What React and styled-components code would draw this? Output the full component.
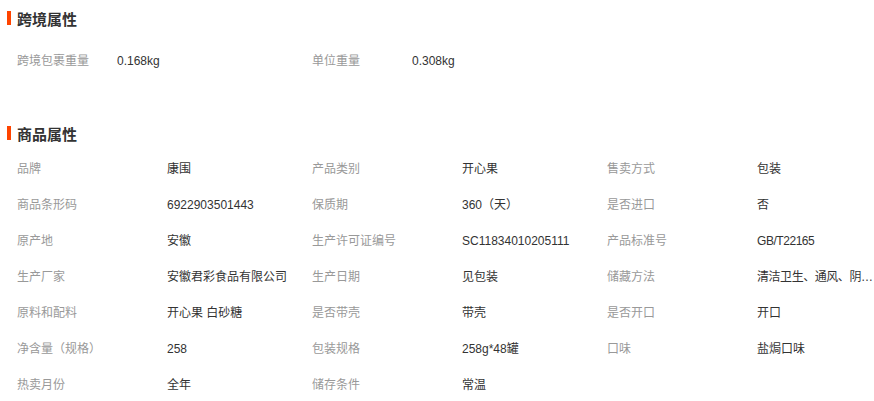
import React from "react";
import styled, { createGlobalStyle } from "styled-components";

const GlobalStyle = createGlobalStyle`
  body {
    margin: 0;
    background: #fff;
    font-family: "Liberation Sans", "Noto Sans CJK SC", sans-serif;
    font-size: 12px;
  }
`;

const Page = styled.div`
  width: 874px;
  padding-left: 7px;
  box-sizing: border-box;
`;

const Section = styled.section`
  margin-bottom: ${(p) => p.$gap || 0}px;
`;

const Heading = styled.h3`
  margin: 0;
  height: 36px;
  display: flex;
  align-items: center;
  gap: 6px;
  font-size: 15px;
  font-weight: 700;
  color: #333;
  font-family: "Noto Sans CJK SC", sans-serif;

  &::before {
    content: "";
    width: 4px;
    height: 14px;
    background: #ff4400;
  }
`;

const Grid = styled.div`
  display: grid;
  grid-template-columns: ${(p) => p.$cols};
  padding-left: 10px;
  margin-top: ${(p) => p.$top || 0}px;
`;

const Cell = styled.div`
  height: 36px;
  line-height: 36px;
  white-space: nowrap;
  overflow: hidden;
  text-overflow: ellipsis;
  letter-spacing: ${(p) => (p.$tight ? "-0.45px" : "normal")};
  color: ${(p) => (p.$label ? "#999" : "#333")};
`;

const crossBorder = [
  ["跨境包裹重量", "0.168kg"],
  ["单位重量", "0.308kg"],
];

const attrs = [
  ["品牌", "康围"],
  ["产品类别", "开心果"],
  ["售卖方式", "包装"],
  ["商品条形码", "6922903501443"],
  ["保质期", "360（天）"],
  ["是否进口", "否"],
  ["原产地", "安徽"],
  ["生产许可证编号", "SC11834010205111"],
  ["产品标准号", "GB/T22165"],
  ["生产厂家", "安徽君彩食品有限公司"],
  ["生产日期", "见包装"],
  ["储藏方法", "清洁卫生、通风、阴凉干燥处储存"],
  ["原料和配料", "开心果 白砂糖"],
  ["是否带壳", "带壳"],
  ["是否开口", "开口"],
  ["净含量（规格）", "258"],
  ["包装规格", "258g*48罐"],
  ["口味", "盐焗口味"],
  ["热卖月份", "全年"],
  ["储存条件", "常温"],
];

// long values in the last column get squeezed a bit before the ellipsis
const Pairs = ({ items, cols = 2 }) =>
  items.map(([k, v], i) => {
    const last = i % cols === cols - 1;
    return (
      <React.Fragment key={k}>
        <Cell $label>{k}</Cell>
        <Cell $tight={last && v.length > 8}>{v}</Cell>
      </React.Fragment>
    );
  });

export default function App() {
  return (
    <>
      <GlobalStyle />
      <Page>
        <Section $gap={36}>
          <Heading>跨境属性</Heading>
          <Grid $top={7} $cols="100px 195px 100px 195px">
            <Pairs items={crossBorder} cols={2} />
          </Grid>
        </Section>
        <Section>
          <Heading>商品属性</Heading>
          <Grid $cols="150px 145px 150px 145px 150px 117px">
            <Pairs items={attrs} cols={3} />
          </Grid>
        </Section>
      </Page>
    </>
  );
}
